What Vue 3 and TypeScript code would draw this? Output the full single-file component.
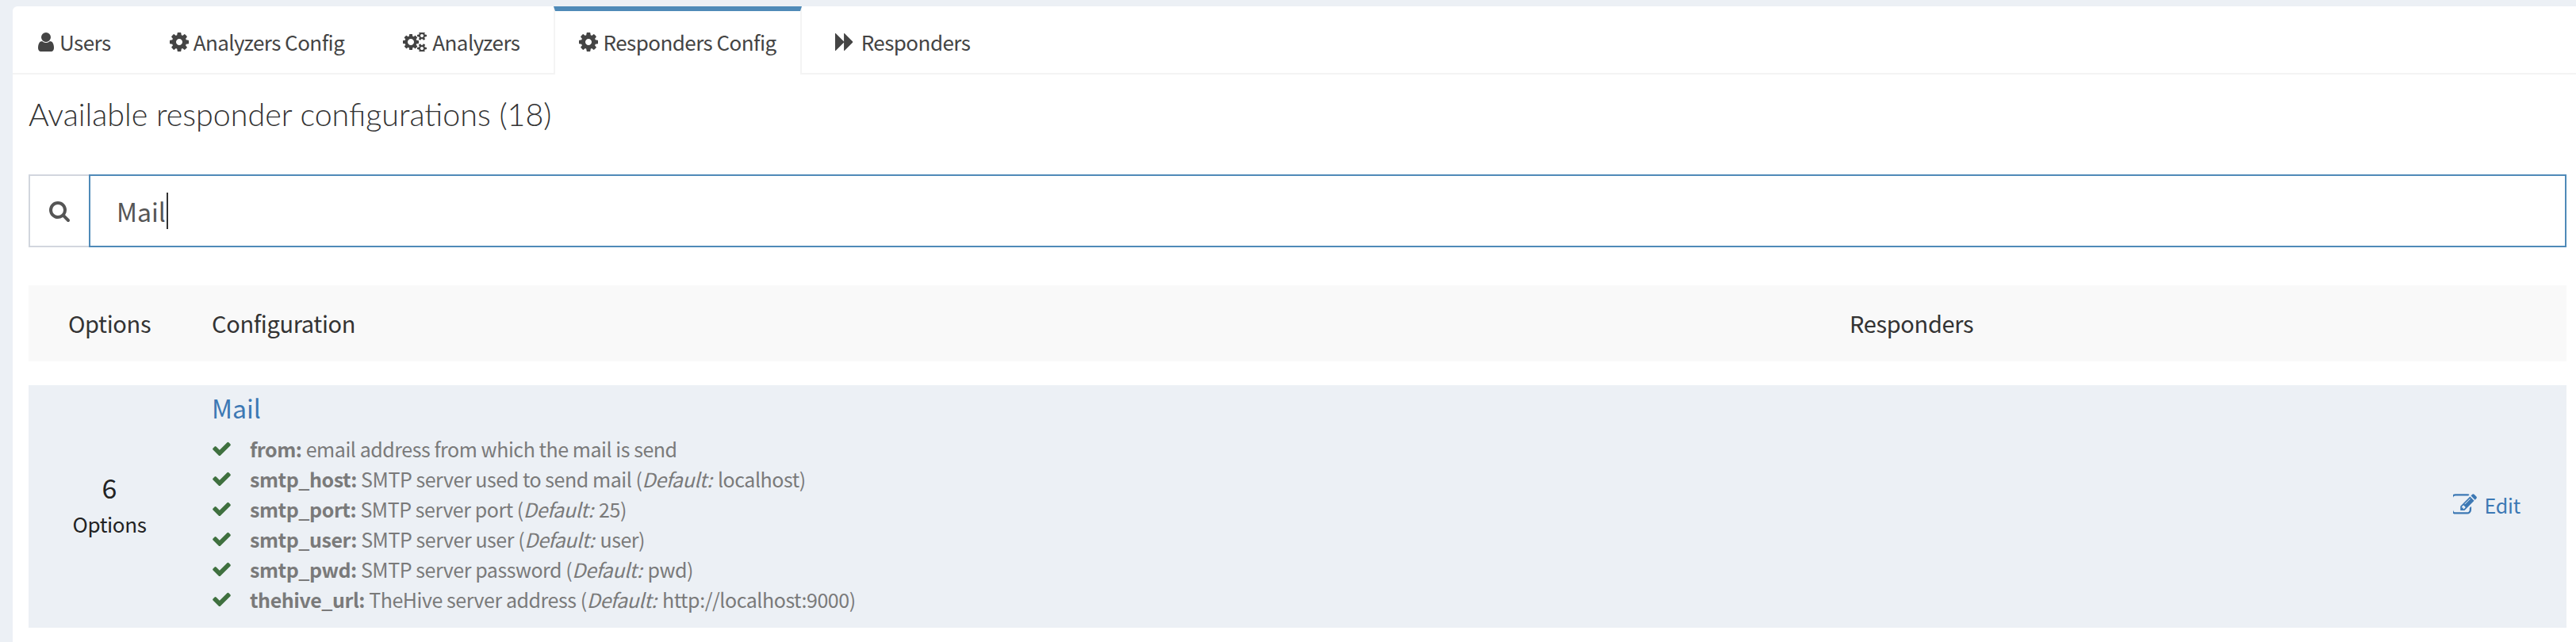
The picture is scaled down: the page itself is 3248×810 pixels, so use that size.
<script setup lang="ts">
import { ref } from "vue";

interface Icon {
  box: string;
  w: number;
  h: number;
  d: string;
}

interface Option {
  name: string;
  text: string;
  def?: string;
}

const icons: Record<string, Icon> = {
  user: {
    box: "256 128 1280 1536",
    w: 20,
    h: 24,
    d: "M1536 1399q0 109-62.500 187t-150.500 78h-854q-88 0-150.500-78t-62.500-187q0-85 8.500-160.500t31.500-152 58.500-131 94-89 134.500-34.500q131 128 313 128t313-128q76 0 134.500 34.500t94 89 58.500 131 31.500 152 8.500 160.500zm-256-887q0 159-112.500 271.500t-271.500 112.500-271.500-112.500-112.500-271.500 112.500-271.500 271.500-112.500 271.500 112.500 112.500 271.500z",
  },
  cog: {
    box: "128 128 1536 1536",
    w: 24,
    h: 24,
    d: "M1152 896q0-106-75-181t-181-75-181 75-75 181 75 181 181 75 181-75 75-181zm512-109v222q0 12-8 23t-20 13l-185 28q-19 54-39 91 35 50 107 138 10 12 10 25t-9 23q-27 37-99 108t-94 71q-12 0-26-9l-138-108q-44 23-91 38-16 136-29 186-7 28-36 28h-222q-14 0-24.500-8.500t-11.500-21.500l-28-184q-49-16-90-37l-141 107q-10 9-25 9-14 0-25-11-126-114-165-168-7-10-7-23 0-12 8-23 15-21 51-66.500t54-70.500q-27-50-41-99l-183-27q-13-2-21-12.500t-8-23.500v-222q0-12 8-23t19-13l186-28q14-46 39-92-40-57-107-138-10-12-10-24 0-10 9-23 26-36 98.500-107.500t94.500-71.500q13 0 26 10l138 107q44-23 91-38 16-136 29-186 7-28 36-28h222q14 0 24.500 8.500t11.500 21.500l28 184q49 16 90 37l142-107q9-9 24-9 13 0 25 10 129 119 165 170 7 8 7 22 0 12-8 23-15 21-51 66.500t-54 70.500q26 50 41 98l183 28q13 2 21 12.500t8 23.500z",
  },
  cogs: {
    box: "64 128 1920 1536",
    w: 30,
    h: 24,
    d: "M960 896q0-106-75-181t-181-75-181 75-75 181 75 181 181 75 181-75 75-181zm768 512q0-52-38-90t-90-38-90 38-38 90q0 53 37.500 90.500t90.500 37.500 90.500-37.500 37.500-90.500zm0-1024q0-52-38-90t-90-38-90 38-38 90q0 53 37.500 90.500t90.500 37.500 90.500-37.500 37.500-90.500zm-384 421v185q0 10-7 19.500t-16 10.500l-155 24q-11 35-32 76 34 48 90 115 7 11 7 20 0 12-7 19-23 30-82.500 89.500t-78.500 59.500q-11 0-21-7l-115-90q-37 19-77 31-11 108-23 155-7 24-30 24h-186q-11 0-20-7.500t-10-17.500l-23-153q-34-10-75-31l-118 89q-7 7-20 7-11 0-21-8-144-133-144-160 0-9 7-19 10-14 41-53t47-61q-23-44-35-82l-152-24q-10-1-17-9.500t-7-19.500v-185q0-10 7-19.500t16-10.500l155-24q11-35 32-76-34-48-90-115-7-11-7-20 0-12 7-20 22-30 82-89t79-59q11 0 21 7l115 90q34-18 77-32 11-108 23-154 7-24 30-24h186q11 0 20 7.500t10 17.500l23 153q34 10 75 31l118-89q8-7 20-7 11 0 21 8 144 133 144 160 0 8-7 19-12 16-42 54t-45 60q23 48 34 82l152 23q10 2 17 10.500t7 19.500zm640 533v140q0 16-149 31-12 27-30 52 51 113 51 138 0 4-4 7-122 71-124 71-8 0-46-47t-52-68q-20 2-30 2t-30-2q-14 21-52 68t-46 47q-2 0-124-71-4-3-4-7 0-25 51-138-18-25-30-52-149-15-149-31v-140q0-16 149-31 13-29 30-52-51-113-51-138 0-4 4-7 4-2 35-20t59-34 30-16q8 0 46 46.500t52 67.500q20-2 30-2t30 2q51-71 92-112l6-2q4 0 124 70 4 3 4 7 0 25-51 138 17 23 30 52 149 15 149 31zm0-1024v140q0 16-149 31-12 27-30 52 51 113 51 138 0 4-4 7-122 71-124 71-8 0-46-47t-52-68q-20 2-30 2t-30-2q-14 21-52 68t-46 47q-2 0-124-71-4-3-4-7 0-25 51-138-18-25-30-52-149-15-149-31v-140q0-16 149-31 13-29 30-52-51-113-51-138 0-4 4-7 4-2 35-20t59-34 30-16q8 0 46 46.500t52 67.500q20-2 30-2t30 2q51-71 92-112l6-2q4 0 124 70 4 3 4 7 0 25-51 138 17 23 30 52 149 15 149 31z",
  },
  forward: {
    box: "0 128 1664 1536",
    w: 24,
    h: 24,
    d: "M45 1651q-19 19-32 13t-13-32v-1472q0-26 13-32t32 13l710 710q9 9 13 19v-710q0-26 13-32t32 13l710 710q19 19 19 45t-19 45l-710 710q-19 19-32 13t-13-32v-710q-4 10-13 19z",
  },
};

const searchPath =
  "M1216 832q0-185-131.500-316.500t-316.500-131.500-316.500 131.500-131.500 316.500 131.500 316.500 316.500 131.500 316.500-131.500 131.500-316.500zm512 832q0 52-38 90t-90 38q-54 0-90-38l-343-342q-179 124-399 124-143 0-273.500-55.500t-225-150-150-225-55.500-273.500 55.500-273.500 150-225 225-150 273.500-55.500 273.500 55.500 225 150 150 225 55.500 273.500q0 220-124 399l343 343q37 37 37 90z";
const checkPath =
  "M1671 566q0 40-28 68l-724 724-136 136q-28 28-68 28t-68-28l-136-136-362-362q-28-28-28-68t28-68l136-136q28-28 68-28t68 28l294 295 656-657q28-28 68-28t68 28l136 136q28 28 28 68z";
const editPath =
  "M888 1184l116-116-152-152-116 116v56h96v96h56zm440-720q-16-16-33 1l-350 350q-17 17-1 33t33-1l350-350q17-17 1-33zm80 594v190q0 119-84.500 203.500t-203.500 84.500h-832q-119 0-203.500-84.500t-84.500-203.500v-832q0-119 84.500-203.500t203.500-84.500h832q63 0 117 25 15 7 18 23 3 17-9 29l-49 49q-14 14-32 8-23-6-45-6h-832q-66 0-113 47t-47 113v832q0 66 47 113t113 47h832q66 0 113-47t47-113v-126q0-13 9-22l64-64q15-15 35-9t20 29zm-96-738l288 288-672 672h-288v-288zm444 132l-92 92-288-288 92-92q28-28 68-28t68 28l152 152q28 28 28 68t-28 68z";

const tabs = [
  { label: "Users", icon: "user", gap: 7 },
  { label: "Analyzers Config", icon: "cog", gap: 6 },
  { label: "Analyzers", icon: "cogs", gap: 7 },
  { label: "Responders Config", icon: "cog", gap: 7 },
  { label: "Responders", icon: "forward", gap: 9 },
];

const activeTab = ref<string>("Responders Config");
const search = ref<string>("Mail");

const options: Option[] = [
  { name: "from", text: "email address from which the mail is send" },
  { name: "smtp_host", text: "SMTP server used to send mail", def: "localhost" },
  { name: "smtp_port", text: "SMTP server port", def: "25" },
  { name: "smtp_user", text: "SMTP server user", def: "user" },
  { name: "smtp_pwd", text: "SMTP server password", def: "pwd" },
  { name: "thehive_url", text: "TheHive server address", def: "http://localhost:9000" },
];
</script>

<template>
  <div class="card">
    <ul class="tabs">
      <li
        v-for="tab in tabs"
        :key="tab.label"
        class="tab"
        :class="{ active: tab.label === activeTab }"
      >
        <svg
          :viewBox="icons[tab.icon].box"
          :width="icons[tab.icon].w"
          :height="icons[tab.icon].h"
          :style="{ marginRight: tab.gap + 'px' }"
        >
          <path :d="icons[tab.icon].d" fill="currentColor" />
        </svg>
        <span>{{ tab.label }}</span>
      </li>
    </ul>

    <div class="content">
      <h3 class="title">Available responder configurations (18)</h3>

      <div class="search">
        <span class="addon">
          <svg viewBox="0 0 1792 1792" width="28" height="28">
            <path :d="searchPath" fill="currentColor" />
          </svg>
        </span>
        <div class="input">{{ search }}<span class="caret"></span></div>
      </div>

      <div class="grid head">
        <div class="center">Options</div>
        <div>Configuration</div>
        <div>Responders</div>
      </div>

      <div class="grid row">
        <div class="center count">
          <div class="num">6</div>
          <div class="lbl">Options</div>
        </div>
        <div class="config">
          <a class="name">Mail</a>
          <div v-for="opt in options" :key="opt.name" class="opt">
            <svg class="check" viewBox="121 280 1550 1232" width="23" height="18">
              <path :d="checkPath" fill="currentColor" />
            </svg>
            <span>
              <strong>{{ opt.name }}:</strong> {{ opt.text }}
              <template v-if="opt.def">(<em>Default:</em> {{ opt.def }})</template>
            </span>
          </div>
        </div>
        <div class="actions">
          <a class="edit">
            <svg viewBox="128 128 1664 1536" width="30" height="28">
              <path :d="editPath" fill="currentColor" />
            </svg>
            Edit
          </a>
        </div>
      </div>
    </div>
  </div>
</template>

<style>
html,
body {
  margin: 0;
  background: #ecf0f5;
}
</style>

<style scoped>
.card {
  margin: 8px 0 0 16px;
  min-height: 802px;
  background: #fff;
  border-top-left-radius: 6px;
  font-family: "Noto Sans CJK SC", "Noto Sans", sans-serif;
  font-size: 26px;
  color: #333;
  box-sizing: border-box;
}

.tabs {
  display: flex;
  gap: 10px;
  height: 84px;
  margin: 0;
  padding: 0;
  list-style: none;
  border-bottom: 2px solid #f4f4f4;
  box-sizing: content-box;
}

.tab {
  display: flex;
  align-items: center;
  height: 84px;
  padding: 6px 30px 0;
  border-left: 2px solid transparent;
  border-right: 2px solid transparent;
  color: #444;
  box-sizing: border-box;
  line-height: 40px;
  letter-spacing: -0.55px;
}

.tab.active {
  height: 86px;
  margin-bottom: -2px;
  padding-top: 0;
  padding-bottom: 2px;
  border-top: 6px solid #4f8ab8;
  border-left-color: #f4f4f4;
  border-right-color: #f4f4f4;
  background: #fff;
}

.content {
  padding: 0 12px 0 20px;
}

.title {
  margin: 0;
  padding: 27px 0 53px;
  font-family: Lato, "Noto Sans CJK SC", sans-serif;
  font-size: 39.4px;
  font-weight: 300;
  line-height: 46px;
  color: #333;
}

.search {
  display: flex;
  height: 92px;
}

.addon {
  display: flex;
  align-items: center;
  justify-content: center;
  width: 76px;
  border: 2px solid #d2d6de;
  border-right: none;
  color: #555;
  box-sizing: border-box;
}

.input {
  flex: 1;
  display: flex;
  align-items: center;
  padding-left: 33px;
  border: 2px solid #4f8ab8;
  font-size: 32px;
  color: #555;
  box-sizing: border-box;
}

.caret {
  width: 2px;
  height: 46px;
  margin-left: 1px;
  background: #333;
}

.grid {
  display: grid;
  grid-template-columns: 204px 2065px 1fr;
}

.head {
  align-items: center;
  margin-top: 48px;
  height: 96px;
  padding-bottom: 2px;
  box-sizing: border-box;
  background: #f9f9f9;
  font-size: 29px;
  letter-spacing: -0.35px;
  line-height: 44px;
}

.head > div:nth-child(2),
.head > div:nth-child(3) {
  padding-left: 27px;
}

.row {
  margin-top: 30px;
  height: 306px;
  background: #ecf0f5;
}

.center {
  text-align: center;
}

.count {
  align-self: center;
  margin-top: -6px;
}

.num {
  font-size: 34px;
  line-height: 50px;
  color: #222;
}

.lbl {
  font-size: 26px;
  letter-spacing: -0.4px;
  line-height: 42px;
  color: #222;
}

.config {
  padding: 6px 0 0 27px;
}

.name {
  display: block;
  font-size: 32px;
  line-height: 44px;
  color: #3c78b4;
  margin-bottom: 11px;
}

.opt {
  display: flex;
  align-items: center;
  height: 38px;
  font-size: 25px;
  letter-spacing: -0.45px;
  line-height: 38px;
  color: #7a7a7a;
  white-space: pre-wrap;
}

.opt em {
  margin-right: 2px;
}

.check {
  margin: 0 24px 0 1px;
  color: #3f703f;
  flex: none;
}

.actions {
  display: flex;
  align-items: center;
  justify-content: flex-end;
  padding: 0 58px 4px 0;
}

.edit {
  display: flex;
  align-items: center;
  gap: 10px;
  color: #3c78b4;
  font-size: 25px;
  letter-spacing: -0.2px;
  line-height: 40px;
}
</style>
